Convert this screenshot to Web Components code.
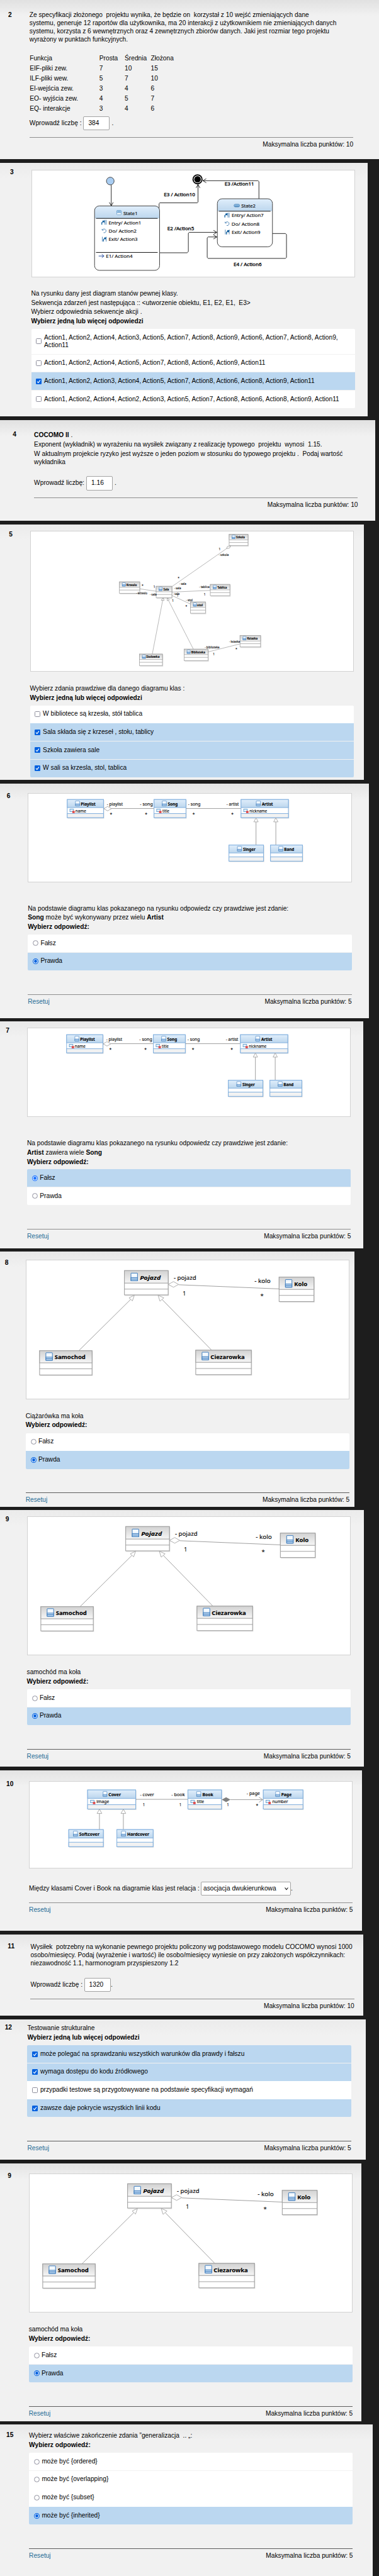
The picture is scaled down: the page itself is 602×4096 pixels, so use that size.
<!DOCTYPE html>
<html lang="pl">
<head>
<meta charset="utf-8">
<title>Quiz</title>
<style>
html,body{margin:0;background:#1d1d1d}
body{width:602px;height:4096px;overflow:hidden;display:flex;flex-direction:column;align-items:flex-start;font:10.2px/14.7px "Liberation Sans",Arial,sans-serif;color:#000}
</style>
</head>
<body>
<quiz-card number="2" style="--w:602px;--h:253px;--left:46.8px;--nx:13.1px;--ny:16.8px;--pad:18.4px;--shade:#e1e1e1">
<quiz-line style="--h:12.73px">Ze specyfikacji złożonego  projektu wynika, że będzie on  korzystał z 10 wejść zmieniających dane</quiz-line>
<quiz-line style="--h:12.73px">systemu, generuje 12 raportów dla użytkownika, ma 20 interakcji z użytkownikiem nie zmieniających danych</quiz-line>
<quiz-line style="--h:12.73px">systemu, korzysta z 6 wewnętrznych oraz 4 zewnętrznych zbiorów danych. Jaki jest rozmiar tego projektu</quiz-line>
<quiz-line style="--h:12.73px">wyrażony w punktach funkcyjnych.</quiz-line>
<factor-table style="--g:16.2px"></factor-table>
<quiz-entry label="Wprowadź liczbę :" value="384" style="--g:3.3px;--box:85.7px;--dot:3px"></quiz-entry>
<quiz-footer points="10" style="--g:10.7px"></quiz-footer>
</quiz-card>

<quiz-card number="3" style="--w:584px;--h:403px;--gap:6px;--left:49.5px;--nx:16.1px;--ny:8.4px;--pad:10.6px;--shade:#ebebeb">
<quiz-diagram kind="states" style="--h:171px"></quiz-diagram>
<quiz-line style="--g:19.5px">Na rysunku dany jest diagram stanów pewnej klasy.</quiz-line>
<quiz-line>Sekwencja zdarzeń jest następująca :: &lt;utworzenie obiektu, E1, E2, E1,  E3&gt;</quiz-line>
<quiz-line>Wybierz odpowiednia sekwencje akcji .</quiz-line>
<quiz-line><b>Wybierz jedną lub więcej odpowiedzi</b></quiz-line>
<quiz-options style="--g:4.6px;--og:1.2px">
<quiz-option kind="check" style="--h:39.1px;--lh:11.9px">Action1, Action2, Action4, Action3, Action5, Action7, Action8, Action9, Action6, Action7, Action8, Action9,<br>Action11</quiz-option>
<quiz-option kind="check" style="--h:27.5px">Action1, Action2, Action4, Action5, Action7, Action8, Action6, Action9, Action11</quiz-option>
<quiz-option kind="check" on style="--h:27.5px">Action1, Action2, Action3, Action4, Action5, Action7, Action8, Action6, Action8, Action9, Action11</quiz-option>
<quiz-option kind="check" style="--h:27.8px">Action1, Action2, Action4, Action2, Action3, Action5, Action7, Action8, Action6, Action8, Action9, Action11</quiz-option>
</quiz-options>
</quiz-card>

<quiz-card number="4" style="--w:595.5px;--h:160px;--gap:6px;--left:54.1px;--nx:20.3px;--ny:15.9px;--pad:16px;--shade:#e1e1e1">
<quiz-line style="--h:15px"><b>COCOMO II</b> .</quiz-line>
<quiz-line style="--h:15px">Exponent (wykładnik) w wyrażeniu na wysiłek związany z realizację typowego  projektu  wynosi  1.15.</quiz-line>
<quiz-line style="--h:15px">W aktualnym projekcie ryzyko jest wyższe o jeden poziom w stosunku do typowego projektu .  Podaj wartość</quiz-line>
<quiz-line style="--h:11.5px">wykładnika</quiz-line>
<quiz-entry label="Wprowadź liczbę:" value="1.16" style="--g:16.9px;--box:83px;--dot:3px"></quiz-entry>
<quiz-footer points="10" style="--g:11px"></quiz-footer>
</quiz-card>

<quiz-card number="5" style="--w:578.2px;--h:406px;--gap:6px;--left:47.6px;--nx:14.2px;--ny:8.5px;--pad:10.4px;--shade:#ebebeb">
<quiz-diagram kind="school" style="--h:223.8px"></quiz-diagram>
<quiz-line style="--g:20px">Wybierz zdania prawdziwe dla danego diagramu klas :</quiz-line>
<quiz-line><b>Wybierz jedną lub więcej odpowiedzi</b></quiz-line>
<quiz-options style="--g:4px">
<quiz-option kind="check">W bibliotece są krzesła, stół tablica</quiz-option>
<quiz-option kind="check" on>Sala składa się z krzeseł , stołu, tablicy</quiz-option>
<quiz-option kind="check" on>Szkoła zawiera sale</quiz-option>
<quiz-option kind="check" on>W sali sa krzesla, stol, tablica</quiz-option>
</quiz-options>
</quiz-card>

<quiz-card number="6" style="--w:586.3px;--h:373px;--gap:6px;--left:44.2px;--nx:10.8px;--ny:12.8px;--pad:14.8px">
<quiz-diagram kind="music" style="--h:142.1px"></quiz-diagram>
<quiz-line style="--g:34.8px">Na podstawie diagramu klas pokazanego na rysunku odpowiedz czy prawdziwe jest zdanie:</quiz-line>
<quiz-line><b>Song</b> może być wykonywany przez wielu <b>Artist</b></quiz-line>
<quiz-line><b>Wybierz odpowiedź:</b></quiz-line>
<quiz-options style="--g:4.1px">
<quiz-option kind="radio">Fałsz</quiz-option>
<quiz-option kind="radio" on>Prawda</quiz-option>
</quiz-options>
<quiz-footer reset points="5" style="--g:37.9px"></quiz-footer>
</quiz-card>

<quiz-card number="7" style="--w:577px;--h:361px;--gap:5px;--left:43px;--nx:9.2px;--ny:8.2px;--pad:10.4px;--shade:#e9e9e9">
<quiz-diagram kind="music" style="--h:141.7px"></quiz-diagram>
<quiz-line style="--g:35.1px">Na podstawie diagramu klas pokazanego na rysunku odpowiedz czy prawdziwe jest zdanie:</quiz-line>
<quiz-line><b>Artist</b> zawiera wiele <b>Song</b></quiz-line>
<quiz-line><b>Wybierz odpowiedź:</b></quiz-line>
<quiz-options style="--g:3.9px;--accent:#1a72ff">
<quiz-option kind="radio" on>Fałsz</quiz-option>
<quiz-option kind="radio">Prawda</quiz-option>
</quiz-options>
<quiz-footer reset points="5" style="--g:38.3px"></quiz-footer>
</quiz-card>

<quiz-card number="8" style="--w:563.2px;--h:406px;--gap:5px;--left:40.7px;--nx:7.7px;--ny:11.3px;--pad:13.3px;--shade:#e8e8e8">
<quiz-diagram kind="vehicle" style="--h:221.6px"></quiz-diagram>
<quiz-line style="--g:19.7px">Ciążarówka ma koła</quiz-line>
<quiz-line><b>Wybierz odpowiedź:</b></quiz-line>
<quiz-options style="--g:4.8px">
<quiz-option kind="radio">Fałsz</quiz-option>
<quiz-option kind="radio" on>Prawda</quiz-option>
</quiz-options>
<quiz-footer reset points="5" style="--g:37.8px;--rule:#5c5c5c"></quiz-footer>
</quiz-card>

<quiz-card number="9" style="--w:578.2px;--h:408px;--gap:5px;--left:42.6px;--nx:8.8px;--ny:7.7px;--pad:9.6px;--shade:#ebebeb">
<quiz-diagram kind="vehicle" style="--h:221.6px"></quiz-diagram>
<quiz-line style="--g:19.8px">samochód ma koła</quiz-line>
<quiz-line><b>Wybierz odpowiedź:</b></quiz-line>
<quiz-options style="--g:4.7px">
<quiz-option kind="radio">Fałsz</quiz-option>
<quiz-option kind="radio" on>Prawda</quiz-option>
</quiz-options>
<quiz-footer reset points="5" style="--g:37.9px;--rule:#5c5c5c"></quiz-footer>
</quiz-card>

<quiz-card number="10" style="--w:574.7px;--h:255px;--gap:6px;--left:46.1px;--nx:10px;--ny:15.3px;--pad:17.2px;--shade:#e3e3e3">
<quiz-diagram kind="books" style="--h:139.3px"></quiz-diagram>
<quiz-entry select label="Między klasami Cover i Book na diagramie klas jest relacja :" value="asocjacja dwukierunkowa" style="--g:20.8px;--box:273.3px;--bw:142.5px;--in:2.7px;--dot:.2px"></quiz-entry>
<quiz-footer reset points="5" style="--g:10.8px"></quiz-footer>
</quiz-card>

<quiz-card number="11" style="--w:577.4px;--h:129px;--gap:6px;--left:48.4px;--nx:12.3px;--ny:12.2px;--pad:14.1px">
<quiz-line style="--h:12.75px">Wysiłek  potrzebny na wykonanie pewnego projektu policzony wg podstawowego modelu COCOMO wynosi 1000</quiz-line>
<quiz-line style="--h:12.75px">osobo/miesięcy. Podaj (wyrażenie i wartość) ile osobo/miesięcy wyniesie on przy założonych współczynnikach:</quiz-line>
<quiz-line style="--h:12.75px">niezawodność 1.1, harmonogram przyspieszony 1.2</quiz-line>
<quiz-entry label="Wprowadź liczbę :" value="1320" style="--g:16.6px;--box:85.3px;--dot:.2px"></quiz-entry>
<quiz-footer points="10" style="--g:11.2px"></quiz-footer>
</quiz-card>

<quiz-card number="12" style="--w:581.3px;--h:223px;--gap:6px;--left:43.4px;--nx:7.7px;--ny:6.4px;--pad:7.15px;--shade:#ebebeb">
<quiz-line>Testowanie strukturalne</quiz-line>
<quiz-line><b>Wybierz jedną lub więcej odpowiedzi</b></quiz-line>
<quiz-options style="--g:4.6px">
<quiz-option kind="check" on>może polegać na sprawdzaniu wszystkich warunków dla prawdy i fałszu</quiz-option>
<quiz-option kind="check" on>wymaga dostępu do kodu źródłowego</quiz-option>
<quiz-option kind="check">przypadki testowe są przygotowywane na podstawie specyfikacji wymagań</quiz-option>
<quiz-option kind="check" on>zawsze daje pokrycie wszystkich linii kodu</quiz-option>
</quiz-options>
<quiz-footer reset points="5" style="--g:38px;--rule:#5c5c5c"></quiz-footer>
</quiz-card>

<quiz-card number="9" style="--w:574px;--h:410px;--gap:6px;--left:45.7px;--nx:12.3px;--ny:13.4px;--pad:15.8px;--shade:#e4e4e4">
<quiz-diagram kind="vehicle" style="--h:221.2px"></quiz-diagram>
<quiz-line style="--g:20.1px">samochód ma koła</quiz-line>
<quiz-line><b>Wybierz odpowiedź:</b></quiz-line>
<quiz-options style="--g:4.8px">
<quiz-option kind="radio">Fałsz</quiz-option>
<quiz-option kind="radio" on>Prawda</quiz-option>
</quiz-options>
<quiz-footer reset points="5" style="--g:37.8px;--rule:#5c5c5c"></quiz-footer>
</quiz-card>

<quiz-card number="15" style="--w:592px;--h:241px;--gap:5px;--left:46.1px;--nx:10px;--ny:10.3px;--pad:11px;--shade:#e8e8e8">
<quiz-line>Wybierz właściwe zakończenie zdania ”generalizacja  .. „:</quiz-line>
<quiz-line><b>Wybierz odpowiedź:</b></quiz-line>
<quiz-options style="--g:4.7px">
<quiz-option kind="radio">może być {ordered}</quiz-option>
<quiz-option kind="radio">może być {overlapping}</quiz-option>
<quiz-option kind="radio">może być {subset}</quiz-option>
<quiz-option kind="radio" on>może być {inherited}</quiz-option>
</quiz-options>
<quiz-footer reset points="5" style="--g:37.7px;--rule:#5c5c5c"></quiz-footer>
</quiz-card>

<script>
function define(name, render) {
  customElements.define(name, class extends HTMLElement {
    connectedCallback() {
      if (!this.shadowRoot) this.attachShadow({mode: "open"}).innerHTML = render(this);
    }
  });
}

define("quiz-card", el => `<style>
:host{display:grid;grid-template-columns:var(--left) 514.4px;box-sizing:border-box;width:var(--w);height:var(--h);margin-top:var(--gap,0px);flex:none;background:linear-gradient(var(--shade,#e5e5e5),#f1f1f1 25px);--g:0px}
.n{padding:var(--ny) 0 0 var(--nx);font-weight:bold;line-height:14.7px}
.c{padding-top:var(--pad);display:flex;flex-direction:column;min-width:0}
</style><div class="n">${el.getAttribute("number")}</div><div class="c"><slot></slot></div>`);

define("quiz-line", () => `<style>
:host{display:block;white-space:pre;margin-top:var(--g,0px);height:var(--h,14.7px);line-height:var(--h,14.7px);flex:none}
</style><slot></slot>`);

/* --g and --h are set on each element, so a nested one resets its own default */
document.head.insertAdjacentHTML("beforeend", "<style>quiz-line,quiz-options,factor-table,quiz-entry,quiz-footer,quiz-diagram{--g:0px}quiz-line{--h:14.7px}quiz-option{--h:28.1px}</style>");

define("factor-table", () => {
  const rows = [["Funkcja","Prosta","Średnia","Złożona"],["EIF-pliki zew.",7,10,15],["ILF-pliki wew.",5,7,10],["EI-wejścia zew.",3,4,6],["EO- wyjścia zew.",4,5,7],["EQ- interakcje",3,4,6]];
  return `<style>
:host{display:grid;grid-template-columns:110.6px 40.3px 41.5px 60px;grid-auto-rows:16px;line-height:16px;margin-top:var(--g);padding-left:.4px}
</style>${rows.flat().map(c => `<span>${c}</span>`).join("")}`;
});

define("quiz-entry", el => `<style>
:host{display:flex;margin-top:var(--g);height:22.2px;line-height:22.2px;flex:none;white-space:pre}
.l{width:var(--box);flex:none}
.b{box-sizing:border-box;width:var(--bw,42px);border:1px solid #a3a3a3;border-radius:2px;background:#fff;line-height:20.2px;padding-left:var(--in,6.9px);display:flex;justify-content:space-between;align-items:center;padding-right:3px}
.d{padding-left:var(--dot)}
svg{width:6px;height:6px;fill:none;stroke:#111;stroke-width:1.1}
</style><span class="l">${el.getAttribute("label")}</span><span class="b"><span>${el.getAttribute("value")}</span>${el.hasAttribute("select") ? '<svg viewBox="0 0 6 6"><path d="M.5 1.5 3 4.6 5.5 1.5"/></svg>' : ""}</span><span class="d">.</span>`);

define("quiz-footer", el => `<style>
:host{display:flex;justify-content:space-between;margin-top:var(--g);border-top:1px solid var(--rule,#8e8e8e);line-height:21px;flex:none}
a{color:#266c96}
</style><a>${el.hasAttribute("reset") ? "Resetuj" : ""}</a><span>Maksymalna liczba punktów: ${el.getAttribute("points")}</span>`);

define("quiz-options", () => `<style>
:host{display:flex;flex-direction:column;gap:var(--og,.6px);margin-top:var(--g);border-radius:2px;overflow:hidden;flex:none}
</style><slot></slot>`);

define("quiz-option", el => {
  const on = el.hasAttribute("on"), radio = el.getAttribute("kind") === "radio";
  const mark = radio
    ? (on ? '<circle cx="4.5" cy="4.5" r="3.9" fill="#fff" stroke="var(--accent,#0060df)" stroke-width="1.1"/><circle cx="4.5" cy="4.5" r="2.4" fill="var(--accent,#0060df)"/>'
          : '<circle cx="4.5" cy="4.5" r="3.9" fill="#fff" stroke="#8f8f9d"/>')
    : (on ? '<rect width="9" height="9" rx="1.2" fill="#0060df"/><path d="M2 4.7 3.8 6.7 7 2.4" fill="none" stroke="#fff" stroke-width="1.15"/>'
          : '<rect x=".5" y=".5" width="8" height="8" rx="1" fill="#fff" stroke="#8f8f9d"/>');
  return `<style>
:host{display:flex;align-items:center;height:var(--h);line-height:var(--lh,14.7px);background:${on ? "#bbd7f0" : "#fff"};flex:none;white-space:pre;padding-left:${radio ? 8.1 : 7.5}px;gap:${radio ? 3.2 : 4}px}
svg{width:9px;height:9px;flex:none}
</style><svg viewBox="0 0 9 9">${mark}</svg><span><slot></slot></span>`;
});

/* Diagrams are written on a grid whose cells are wider than they are tall. */
class Sketch {
  constructor(ox, oy, ky, size) { this.ox = ox; this.oy = oy; this.kx = .38393; this.ky = ky; this.size = size; this.out = ""; }
  x(v) { return ((v - this.ox) * this.kx).toFixed(2); }
  y(v) { return ((v - this.oy) * this.ky).toFixed(2); }
  path(points, attrs = "") {
    this.out += `<path d="M${points.map(p => this.x(p[0]) + " " + this.y(p[1])).join("L")}" ${attrs}/>`;
  }
  text(x1, x2, base, str, attrs = "", size = this.size) {
    this.out += `<text x="${this.x(x1)}" y="${this.y(base)}" font-size="${size}" textLength="${((x2 - x1) * this.kx).toFixed(2)}" lengthAdjust="spacingAndGlyphs" ${attrs}>${str}</text>`;
  }
  rect(x1, y1, x2, y2, attrs) {
    this.out += `<rect x="${this.x(x1)}" y="${this.y(y1)}" width="${((x2 - x1) * this.kx).toFixed(2)}" height="${((y2 - y1) * this.ky).toFixed(2)}" ${attrs}/>`;
  }
  icon(x1, y1, x2, y2, w = .6) {
    const h = y2 - y1, s = `stroke="#3f7dbd" stroke-width="${w}"`;
    this.rect(x1, y1, x2, y2, `rx=".5" fill="#f3f9ff" ${s}`);
    this.rect(x1, y1 + h * .58, x2, y2, `fill="#c3dbf3" ${s}`);
    this.path([[x1, y1 + h * .79], [x2, y1 + h * .79]], s);
  }
  box(blue, x1, y1, x2, y2, a, b, icon, name, n1, n2, base, extra = "") {
    const s = blue ? "#82b0de" : "#a3a3a3", w = this.line || 1;
    this.rect(x1 + 2, y1 + 4, x2 + 3, y2 + 6, 'fill="#000" opacity=".13"');
    this.rect(x1, y1, x2, y2, `fill="#fff" stroke="${s}" stroke-width="${w}"`);
    this.rect(x1, y1, x2, a, `fill="url(#${blue ? "hb" : "hg"})" stroke="${s}" stroke-width="${w}"`);
    if (blue) this.rect(x1, b, x2, y2, `fill="#f2f2f2" stroke="${s}" stroke-width="${w}"`);
    else this.path([[x1, b], [x2, b]], `stroke="${s}" stroke-width="${w}"`);
    this.icon(icon[0], icon[1], icon[2], icon[3], icon[4]);
    this.text(n1, n2, base, name, `font-weight="bold" ${extra}`);
  }
  attribute(x, y, str, x1, x2) {
    this.rect(x, y, x + 15, y + 16, 'fill="#e6f1fb" stroke="#5f9ccc" stroke-width=".9"');
    this.rect(x + 10, y + 11, x + 20, y + 25, 'fill="#e04848"');
    this.text(x1, x2, y + 20, str);
  }
  star(x, y) { this.out += `<text x="${this.x(x)}" y="${(+this.y(y) + this.size * .52).toFixed(2)}" text-anchor="middle" font-size="${this.size}">*</text>`; }
}
const gray = 'stroke="#a0a0a0" stroke-width="1" fill="none"', hollow = 'stroke="#9a9a9a" stroke-width=".8" fill="#fff"';

const drawings = {
  states() {
    const d = new Sketch(129, 995, .27094, 7.8), ink = 'stroke="#151515" stroke-width=".9" fill="none" stroke-linejoin="round"';
    const arrow = (x, y, dx, dy) => d.path(dx ? [[x - dx * 14, y - 12], [x, y], [x - dx * 14, y + 12]] : [[x - 8, y - dy * 20], [x, y], [x + 8, y - dy * 20]], ink);
    d.path([[459, 1084], [459, 1205]], ink); arrow(459, 1206, 0, 1);
    d.path([[657, 1222], [657, 1193], [660, 1189], [815, 1189], [818, 1184], [818, 1082]], ink); arrow(818, 1081, 0, -1);
    d.path([[1070, 1165], [1070, 1064], [1066, 1059], [838, 1059]], ink); arrow(838, 1059, -1, 0);
    d.path([[659, 1482], [773, 1482], [778, 1475], [778, 1367], [782, 1362], [896, 1362]], ink); arrow(896, 1362, 1, 0);
    d.path([[1126, 1369], [1180, 1369], [1184, 1375], [1184, 1509], [1180, 1515], [860, 1515], [856, 1509], [856, 1394], [860, 1389], [896, 1389]], ink); arrow(896, 1389, 1, 0);
    const circle = (x, y, r, a) => d.out += `<circle cx="${d.x(x)}" cy="${d.y(y)}" r="${r}" ${a}/>`;
    circle(455, 1061, 6.1, 'fill="#a9cdf2" stroke="#333" stroke-width=".9"');
    circle(816, 1051, 8, 'fill="#000"'); circle(816, 1051, 6.2, 'fill="#fff"'); circle(816, 1051, 5.2, 'fill="#000"');
    const state = (x1, y1, x2, y2, line) => {
      d.rect(x1, y1, x2, y2, 'rx="7.5" fill="#fff"');
      const X = +d.x(x1), Y = +d.y(y1), W = (x2 - x1) * d.kx, H = (line - y1) * d.ky;
      d.out += `<path d="M${X} ${Y + H}V${Y + 7.5}q0-7.5 7.5-7.5H${X + W - 7.5}q7.5 0 7.5 7.5V${Y + H}z" fill="url(#hb)"/>`;
      d.rect(x1, y1, x2, y2, 'rx="7.5" fill="none" stroke="#444" stroke-width="1"');
      d.path([[x1 + 6, line], [x2 - 8, line]], 'stroke="#111" stroke-width="1"');
    };
    const steps = (x, y, names, ends) => {
      const b = 'stroke="#2f6fa8" stroke-width=".8" fill="none"';
      const flag = (fx, fy) => d.path([[fx, fy + 26], [fx, fy + 14], [fx + 9, fy + 4], [fx + 3, fy + 4], [fx + 9, fy + 4], [fx + 9, fy + 14]], 'stroke="#0d5c9c" stroke-width="1.3" fill="none"');
      flag(x + 1, y); d.path([[x + 14, y - 2], [x + 14, y + 26]], b); d.path([[x + 19, y - 2], [x + 19, y + 26]], b);
      const cx = +d.x(x + 11), cy = +d.y(y + 62);
      d.out += `<path d="M${cx - 2.6} ${cy - 1.6}A3 3 0 1 1 ${cx - 1} ${cy + 2.9}M${cx - 3.4} ${cy - 3}v2h2.4" ${b}/>`;
      d.path([[x + 3, y + 97], [x + 3, y + 125]], b); flag(x + 8, y + 99); d.path([[x + 19, y + 97], [x + 19, y + 125]], b);
      names.forEach((n, i) => d.text(x + 29, ends[i], y + 24 + i * 49.3, n, firm));
    };
    const firm = 'stroke="#000" stroke-width=".15"', strong = 'stroke="#000" stroke-width=".3"';
    state(390, 1207, 659, 1585, 1280); state(898, 1165, 1126, 1447, 1238);
    d.path([[396, 1480], [651, 1480]], 'stroke="#111" stroke-width="1"');
    d.rect(482, 1234, 500, 1259, 'rx=".8" fill="#f6fbff" stroke="#6b9fcb" stroke-width=".8"');
    d.rect(482, 1234, 500, 1247, 'rx=".8" fill="#a9cdec" stroke="#6b9fcb" stroke-width=".8"');
    d.path([[486, 1241], [496, 1241]], 'stroke="#5f94c2" stroke-width=".7"');
    d.text(509, 568, 1260, "State1", firm);
    d.rect(967, 1197, 990, 1213, 'rx="2" fill="#8dbce3" stroke="#3f77ad" stroke-width=".7"');
    d.rect(969, 1206, 988, 1212, 'rx=".8" fill="#4f88bb"');
    d.text(997, 1056, 1217, "State2", firm);
    steps(419, 1291, ["Entry/ Action1", "Do/ Action2", "Exit/ Action3"], [583, 564, 568]);
    steps(928, 1249, ["Entry/ Action7", "Do/ Action8", "Exit/ Action9"], [1089, 1072, 1076]);
    d.path([[407, 1501], [429, 1501]], 'stroke="#2b4f9f" stroke-width="1"'); d.path([[420, 1491], [429, 1501], [420, 1511]], 'stroke="#2b4f9f" stroke-width="1" fill="none"');
    d.text(437, 547, 1513, "E1/ Action4", firm);
    d.text(677, 806, 1151, "E3 / Action10", strong); d.text(928, 1050, 1088, "E3 /Action11", strong);
    d.text(691, 802, 1348, "E2 /Action5", strong); d.text(965, 1081, 1559, "E4 / Action6", strong);
    return d.out;
  },
  school() {
    const d = new Sketch(124, 98, .27094, 5.1);
    d.line = .8;
    [[[936, 199], [710, 422]], [[577, 435], [645, 449]], [[710, 454], [869, 444]], [[710, 474], [787, 524]], [[672, 503], [629, 818]], [[696, 503], [799, 789]], [[860, 805], [992, 758]]].forEach(p => d.path(p, 'stroke="#a6a6a6" stroke-width=".8" fill="none"'));
    d.path([[953, 182], [949, 195], [936, 199], [940, 186], [953, 182]], hollow);
    d.path([[674, 487], [666, 502], [678, 503], [674, 487]], hollow);
    d.path([[691, 487], [691, 505], [700, 499], [691, 487]], hollow);
    [["Szkola", 947, 115, 1025, 181, 976, 1012], ["Krzeslo", 493, 394, 577, 461, 522, 565], ["Sala", 645, 420, 710, 487, 675, 698], ["Tablica", 869, 409, 950, 475, 898, 938], ["stol", 787, 512, 849, 578, 815, 838], ["Ksiazka", 992, 709, 1077, 776, 1021, 1065], ["Biblioteka", 761, 789, 860, 856, 790, 848], ["Stolowka", 576, 818, 671, 885, 604, 659]]
      .forEach(([n, x1, y1, x2, y2, a, b]) => d.box(false, x1, y1, x2, y2, y1 + 32, y1 + 48, [x1 + 12, y1 + 5, x1 + 25, y1 + 25, .6], n, a, b, y1 + 23.5));
    [["1", 904, 911, 207], ["- szkola", 904, 945, 243], ["- sala", 741, 769, 411], ["- sala", 719, 748, 438], ["- sala", 715, 742, 470], ["1", 731, 737, 481], ["1", 634, 641, 432], ["- krzeslo", 563, 608, 468], ["- sala", 619, 647, 476], ["- tablica", 823, 866, 432], ["1", 842, 849, 476], ["- stol", 768, 796, 506], ["1", 711, 718, 511], ["- biblioteka", 846, 907, 784], ["- ksiazka", 947, 992, 752], ["1", 880, 887, 826]]
      .forEach(([t, a, b, y]) => d.text(a, b, y, t, "", 5));
    [[738, 367], [589, 414], [770, 536], [977, 785]].forEach(p => d.star(...p));
    return d.out;
  },
  music() {
    const d = new Sketch(115, 115, .25062, 6.7);
    d.path([[459, 213], [635, 213]], gray); d.path([[767, 213], [995, 213]], gray);
    d.path([[427, 214], [443, 200], [459, 214], [443, 228], [427, 214]], hollow);
    [1057, 1139].forEach(x => { d.path([[x, 298], [x, 445]], gray); });
    d.box(true, 276, 156, 426, 271, 207, 245, [310, 165, 327, 196], "Playlist", 332, 393, 193);
    d.box(true, 635, 156, 767, 271, 207, 245, [669, 165, 686, 196], "Song", 692, 733, 193);
    d.box(true, 995, 156, 1191, 271, 207, 245, [1058, 165, 1075, 196], "Artist", 1081, 1127, 193);
    d.box(true, 945, 445, 1088, 547, 495, 520, [980, 453, 997, 484], "Singer", 1003, 1055, 481);
    d.box(true, 1117, 445, 1249, 547, 495, 520, [1151, 453, 1168, 484], "Band", 1173, 1215, 481);
    [1057, 1139].forEach(x => d.path([[x, 272], [x - 9, 298], [x + 9, 298], [x, 272]], hollow));
    d.attribute(287, 217, "name", 310, 354); d.attribute(646, 217, "title", 670, 698); d.attribute(1006, 217, "nickname", 1030, 1103);
    [["- playlist", 440, 506], ["- song", 577, 630], ["- song", 776, 827], ["- artist", 935, 986]].forEach(([t, a, b]) => d.text(a, b, 193, t));
    [457, 602, 799, 959].forEach(x => d.star(x, 243));
    return d.out;
  },
  vehicle() {
    const d = new Sketch(106, 65, .26417, 9.5);
    d.line = 1.1;
    d.path([[738, 212], [1154, 237]], gray); d.path([[540, 300], [323, 612]], gray); d.path([[670, 301], [877, 609]], gray);
    d.path([[695, 210], [717, 193], [738, 210], [717, 227], [695, 210]], hollow);
    d.box(false, 514, 127, 695, 273, 202, 238, [541, 142, 568, 188, 1], "Pojazd", 578, 664, 181, 'font-style="italic"');
    d.box(false, 1154, 166, 1298, 313, 240, 276, [1180, 181, 1207, 227, 1], "Kolo", 1216, 1271, 220);
    d.box(false, 163, 609, 380, 755, 682, 718, [189, 621, 216, 667, 1], "Samochod", 225, 353, 661);
    d.box(false, 809, 606, 1039, 753, 679, 716, [835, 618, 862, 664, 1], "Ciezarowka", 870, 1012, 659);
    d.path([[555, 275], [533, 291], [547, 309], [555, 275]], hollow);
    d.path([[653, 275], [661, 311], [677, 291], [653, 275]], hollow);
    d.text(718, 811, 182, "- pojazd"); d.text(1052, 1119, 201, "- kolo"); d.text(755, 768, 276, "1"); d.star(1083, 274);
    return d.out;
  },
  books() {
    const d = new Sketch(120, 110, .25739, 6.7);
    d.path([[559, 219], [775, 219]], gray); d.path([[951, 221], [1085, 221]], gray);
    d.path([[1069, 206], [1085, 221], [1069, 237]], gray);
    d.path([[915, 221], [933, 206], [951, 221], [933, 236]], 'fill="#808080"');
    [409, 508].forEach(x => d.path([[x, 306], [x, 406]], gray));
    d.box(true, 360, 161, 559, 279, 213, 252, [424, 170, 440, 202], "Cover", 446, 498, 198);
    d.box(true, 775, 161, 914, 279, 213, 252, [811, 170, 828, 202], "Book", 835, 880, 198);
    d.box(true, 1087, 161, 1251, 279, 213, 252, [1138, 170, 1155, 202], "Page", 1161, 1204, 198);
    d.box(true, 282, 406, 425, 511, 458, 484, [301, 415, 318, 447], "Softcover", 325, 409, 443);
    d.box(true, 481, 406, 631, 511, 458, 484, [500, 415, 517, 447], "Hardcover", 524, 615, 443);
    [409, 508].forEach(x => d.path([[x, 280], [x - 10, 306], [x + 10, 306], [x, 280]], hollow));
    d.attribute(372, 224, "image", 397, 449); d.attribute(787, 224, "title", 812, 842); d.attribute(1098, 224, "number", 1124, 1189);
    d.text(577, 635, 198, "- cover"); d.text(707, 762, 198, "- book"); d.text(1018, 1073, 190, "- page");
    d.text(588, 597, 262, "1"); d.text(739, 748, 262, "1"); d.text(936, 945, 262, "1"); d.star(1061, 250);
    return d.out;
  }
};

define("quiz-diagram", el => `<style>
:host{display:block;box-sizing:border-box;width:514.4px;height:var(--h);margin-top:var(--g);border:1px solid #d2d2d2;background:#fff;flex:none}
svg{display:block;width:100%;height:100%;margin:-.5px 0 0 -.5px;overflow:visible;font-family:"Noto Sans","Open Sans",sans-serif;fill:#000}
text{stroke:#000;stroke-width:.12}
text[stroke-width=".3"]{stroke-width:.3}
</style><svg><defs><linearGradient id="hb" x2="0" y2="1"><stop stop-color="#e0eefb"/><stop offset="1" stop-color="#bcd6ed"/></linearGradient><linearGradient id="hg" x2="0" y2="1"><stop stop-color="#d2d2d2"/><stop offset="1" stop-color="#f6f6f6"/></linearGradient></defs>${drawings[el.getAttribute("kind")]()}</svg>`);
</script>
</body>
</html>
